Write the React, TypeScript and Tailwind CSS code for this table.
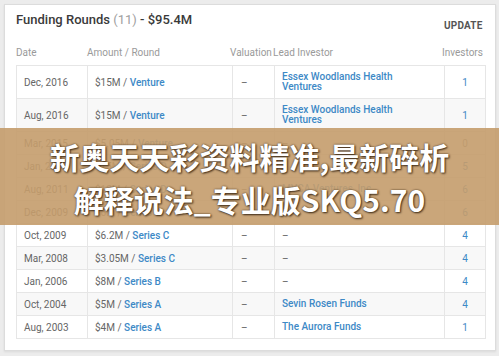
import React from "react";

type Row = {
  date: string;
  amt: string;
  round: string;
  val: string;
  lead: string[] | null;
  inv: string;
};

const rows: Row[] = [
  { date: "Dec, 2016", amt: "$15M", round: "Venture", val: "–", lead: ["Essex Woodlands Health", "Ventures"], inv: "1" },
  { date: "Aug, 2016", amt: "$15M", round: "Venture", val: "–", lead: ["Essex Woodlands Health", "Ventures"], inv: "1" },
  { date: "Mar, 2015", amt: "$5.05M", round: "Venture", val: "–", lead: null, inv: "0" },
  { date: "Jan, 2012", amt: "$15M", round: "Series D", val: "–", lead: null, inv: "5" },
  { date: "Aug, 2011", amt: "$12M", round: "Series D", val: "–", lead: ["MVCA Ventures, Inc."], inv: "6" },
  { date: "Dec, 2009", amt: "$6M", round: "Series C", val: "–", lead: null, inv: "6" },
  { date: "Oct, 2009", amt: "$6.2M", round: "Series C", val: "–", lead: null, inv: "4" },
  { date: "Mar, 2008", amt: "$3.05M", round: "Series C", val: "–", lead: null, inv: "4" },
  { date: "Jan, 2006", amt: "$8M", round: "Series B", val: "–", lead: null, inv: "4" },
  { date: "Oct, 2004", amt: "$5M", round: "Series A", val: "–", lead: ["Sevin Rosen Funds"], inv: "4" },
  { date: "Aug, 2003", amt: "$4M", round: "Series A", val: "–", lead: ["The Aurora Funds"], inv: "1" },
];

export default function App() {
  return (
    <div
      className="relative w-[499px] h-[356px] overflow-hidden bg-[#ececec] p-[4px] pr-[3px]"
      style={{ fontFamily: "Roboto, 'Liberation Sans', sans-serif" }}
    >
      <div className="h-[347px] bg-white border border-[#dcdcdc] shadow-[0_1px_2px_rgba(0,0,0,0.08)] pl-[11px] pr-[9px] pt-[7px]">
        <div className="flex items-start justify-between">
          <div className="text-[13px] leading-[16px] font-medium text-[#3a3a3a]">
            Funding Rounds <span className="font-normal text-[#a0a0a0]">(11)</span> - $95.4M
          </div>
          <div className="w-[42px] mt-[8px] text-[10px] leading-[12px] font-bold text-[#555] tracking-[0.2px]">
            UPDATE
          </div>
        </div>
        <div className="flex mt-[14px] h-[14px] text-[10px] leading-[14px] text-[#9a9a9a]">
          <div className="w-[71px]">Date</div>
          <div className="w-[145px] -ml-[1px] pl-[1px]">Amount / Round</div>
          <div className="w-[42px] -ml-[1px]">Valuation</div>
          <div className="w-[170px] pl-[1px]">Lead Investor</div>
          <div className="w-[42px]">Investors</div>
        </div>
        <div className="mt-[5px] w-[470px] border-t border-l border-r border-[#e6e6e6] text-[10px]">
          {rows.map((r, i) => {
            const tall = i < 2;
            return (
              <div
                key={i}
                className={`flex border-b border-[#e6e6e6] ${tall ? "h-[33px]" : "h-[23px]"} ${
                  i % 2 === 1 ? "bg-[#f8f8f8]" : "bg-white"
                }`}
              >
                <div className="w-[71px] border-r border-[#e6e6e6] flex items-center pl-[7px] text-[#666]">
                  {r.date}
                </div>
                <div className="w-[145px] border-r border-[#e6e6e6] flex items-center pl-[7px] text-[#666]">
                  {r.amt}&nbsp;/&nbsp;
                  <span className="text-[#3d89c6] font-medium">{r.round}</span>
                </div>
                <div className="w-[42px] border-r border-[#e6e6e6] flex items-center pl-[8px] text-[#666]">
                  {r.val}
                </div>
                <div className="w-[170px] border-r border-[#e6e6e6] flex items-center pl-[7px]">
                  {r.lead ? (
                    <div className="text-[#3d89c6] font-medium leading-[10px]">
                      {r.lead.map((l, j) => (
                        <div key={j}>{l}</div>
                      ))}
                    </div>
                  ) : (
                    <span className="text-[#666]">–</span>
                  )}
                </div>
                <div
                  className={`flex-1 flex items-center justify-center ${
                    r.inv === "0" ? "text-[#888]" : "text-[#3d89c6]"
                  }`}
                >
                  {r.inv}
                </div>
              </div>
            );
          })}
        </div>
      </div>

      <div className="absolute left-0 right-0 top-[128px] h-[97px] bg-[#c49c6b]/90 flex flex-col items-center justify-center">
        <div
          className="text-white font-bold text-[30px] leading-[43px] text-center pt-[3px] [text-shadow:0_0_2px_rgba(60,40,20,0.9),1px_1px_2px_rgba(40,25,10,0.8)]"
          style={{ fontFamily: "'Noto Sans CJK SC', 'Noto Sans', sans-serif" }}
        >
          <div>新奥天天彩资料精准,最新碎析</div>
          <div>解释说法_专业版SKQ5.70</div>
        </div>
      </div>
    </div>
  );
}
